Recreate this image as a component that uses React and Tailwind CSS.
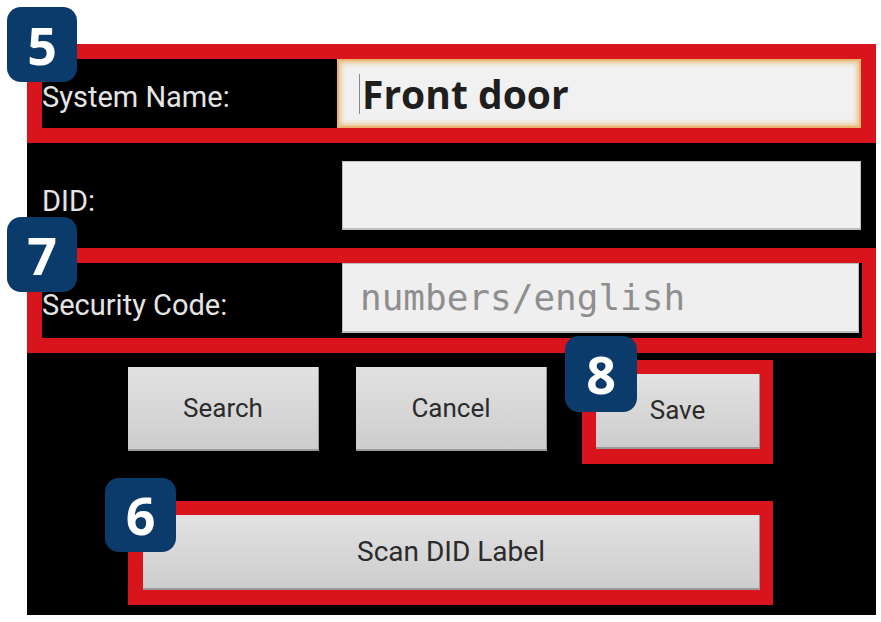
const Badge = ({ n, className }) => (
  <div
    className={`absolute flex items-center justify-center rounded-[14px] bg-[#0b3b6b] text-white font-bold text-[52px] leading-none font-['Open_Sans',sans-serif] ${className}`}
  >
    {n}
  </div>
);

const Label = ({ children }) => (
  <span className="text-[29px] text-[#e4e4e4] font-['Roboto',sans-serif] leading-none">{children}</span>
);

const GrayButton = ({ children, className }) => (
  <div
    className={`flex items-center justify-center bg-gradient-to-b from-[#e2e2e2] to-[#cdcdcd] border-b-2 border-r border-[#9a9a9a] text-[26px] text-[#2b2b2b] font-['Roboto',sans-serif] ${className}`}
  >
    {children}
  </div>
);

export default function App() {
  return (
    <div className="relative w-[881px] h-[622px] bg-white overflow-hidden">
      <div className="ml-[27px] mt-[44px] w-[849px] h-[571px] bg-black flex flex-col">
        {/* System Name */}
        <div className="h-[99px] border-[15px] border-[#d8151d] flex">
          <div className="w-[295px] flex items-center pt-[8px]">
            <Label>System Name:</Label>
          </div>
          <div className="flex-1 flex items-center bg-[#f1f1f1] border-2 border-[#e8b470] shadow-[inset_0_0_5px_2px_rgba(232,160,70,0.6)] pl-[20px]">
            <span className="w-px h-[40px] bg-[#888] mr-[2px]" />
            <span className="text-[39px] font-bold text-[#1e1e1e] font-['Open_Sans',sans-serif] leading-none">Front door</span>
          </div>
        </div>

        {/* DID */}
        <div className="h-[105px] flex pl-[15px] pr-[15px]">
          <div className="w-[300px] flex items-center pt-[12px]">
            <Label>DID:</Label>
          </div>
          <div className="flex-1 mt-[18px] h-[69px] bg-[#f0f0f0] border border-[#bdbdbd] border-b-2" />
        </div>

        {/* Security Code */}
        <div className="h-[105px] border-[15px] border-r-[14px] border-[#d8151d] flex">
          <div className="w-[300px] flex items-center pt-[10px]">
            <Label>Security Code:</Label>
          </div>
          <div className="flex-1 mb-[5px] mr-[3px] flex items-center bg-[#efefef] border border-[#bdbdbd] border-b-2 pl-[17px]">
            <span className="text-[36px] text-[#8e8e8e] font-['DejaVu_Sans_Mono',monospace] leading-none">numbers/english</span>
          </div>
        </div>

        {/* Buttons */}
        <div className="mt-[7px] flex items-start pl-[101px]">
          <GrayButton className="mt-[7px] w-[191px] h-[84px]">Search</GrayButton>
          <GrayButton className="mt-[7px] ml-[37px] w-[191px] h-[84px]">Cancel</GrayButton>
          <div className="ml-[35px] w-[191px] h-[104px] border-[14px] border-b-[15px] border-r-[13px] border-[#d8151d] flex">
            <GrayButton className="flex-1">Save</GrayButton>
          </div>
        </div>

        {/* Scan DID Label */}
        <div className="mt-[37px] ml-[101px] w-[645px] h-[104px] border-[15px] border-t-[14px] border-r-[13px] border-[#d8151d] flex">
          <GrayButton className="flex-1 text-[28px]">Scan DID Label</GrayButton>
        </div>
      </div>

      <Badge n="5" className="left-[7px] top-[7px] w-[70px] h-[75px]" />
      <Badge n="7" className="left-[7px] top-[217px] w-[70px] h-[75px]" />
      <Badge n="8" className="left-[565px] top-[336px] w-[72px] h-[76px]" />
      <Badge n="6" className="left-[105px] top-[478px] w-[71px] h-[74px]" />
    </div>
  );
}
